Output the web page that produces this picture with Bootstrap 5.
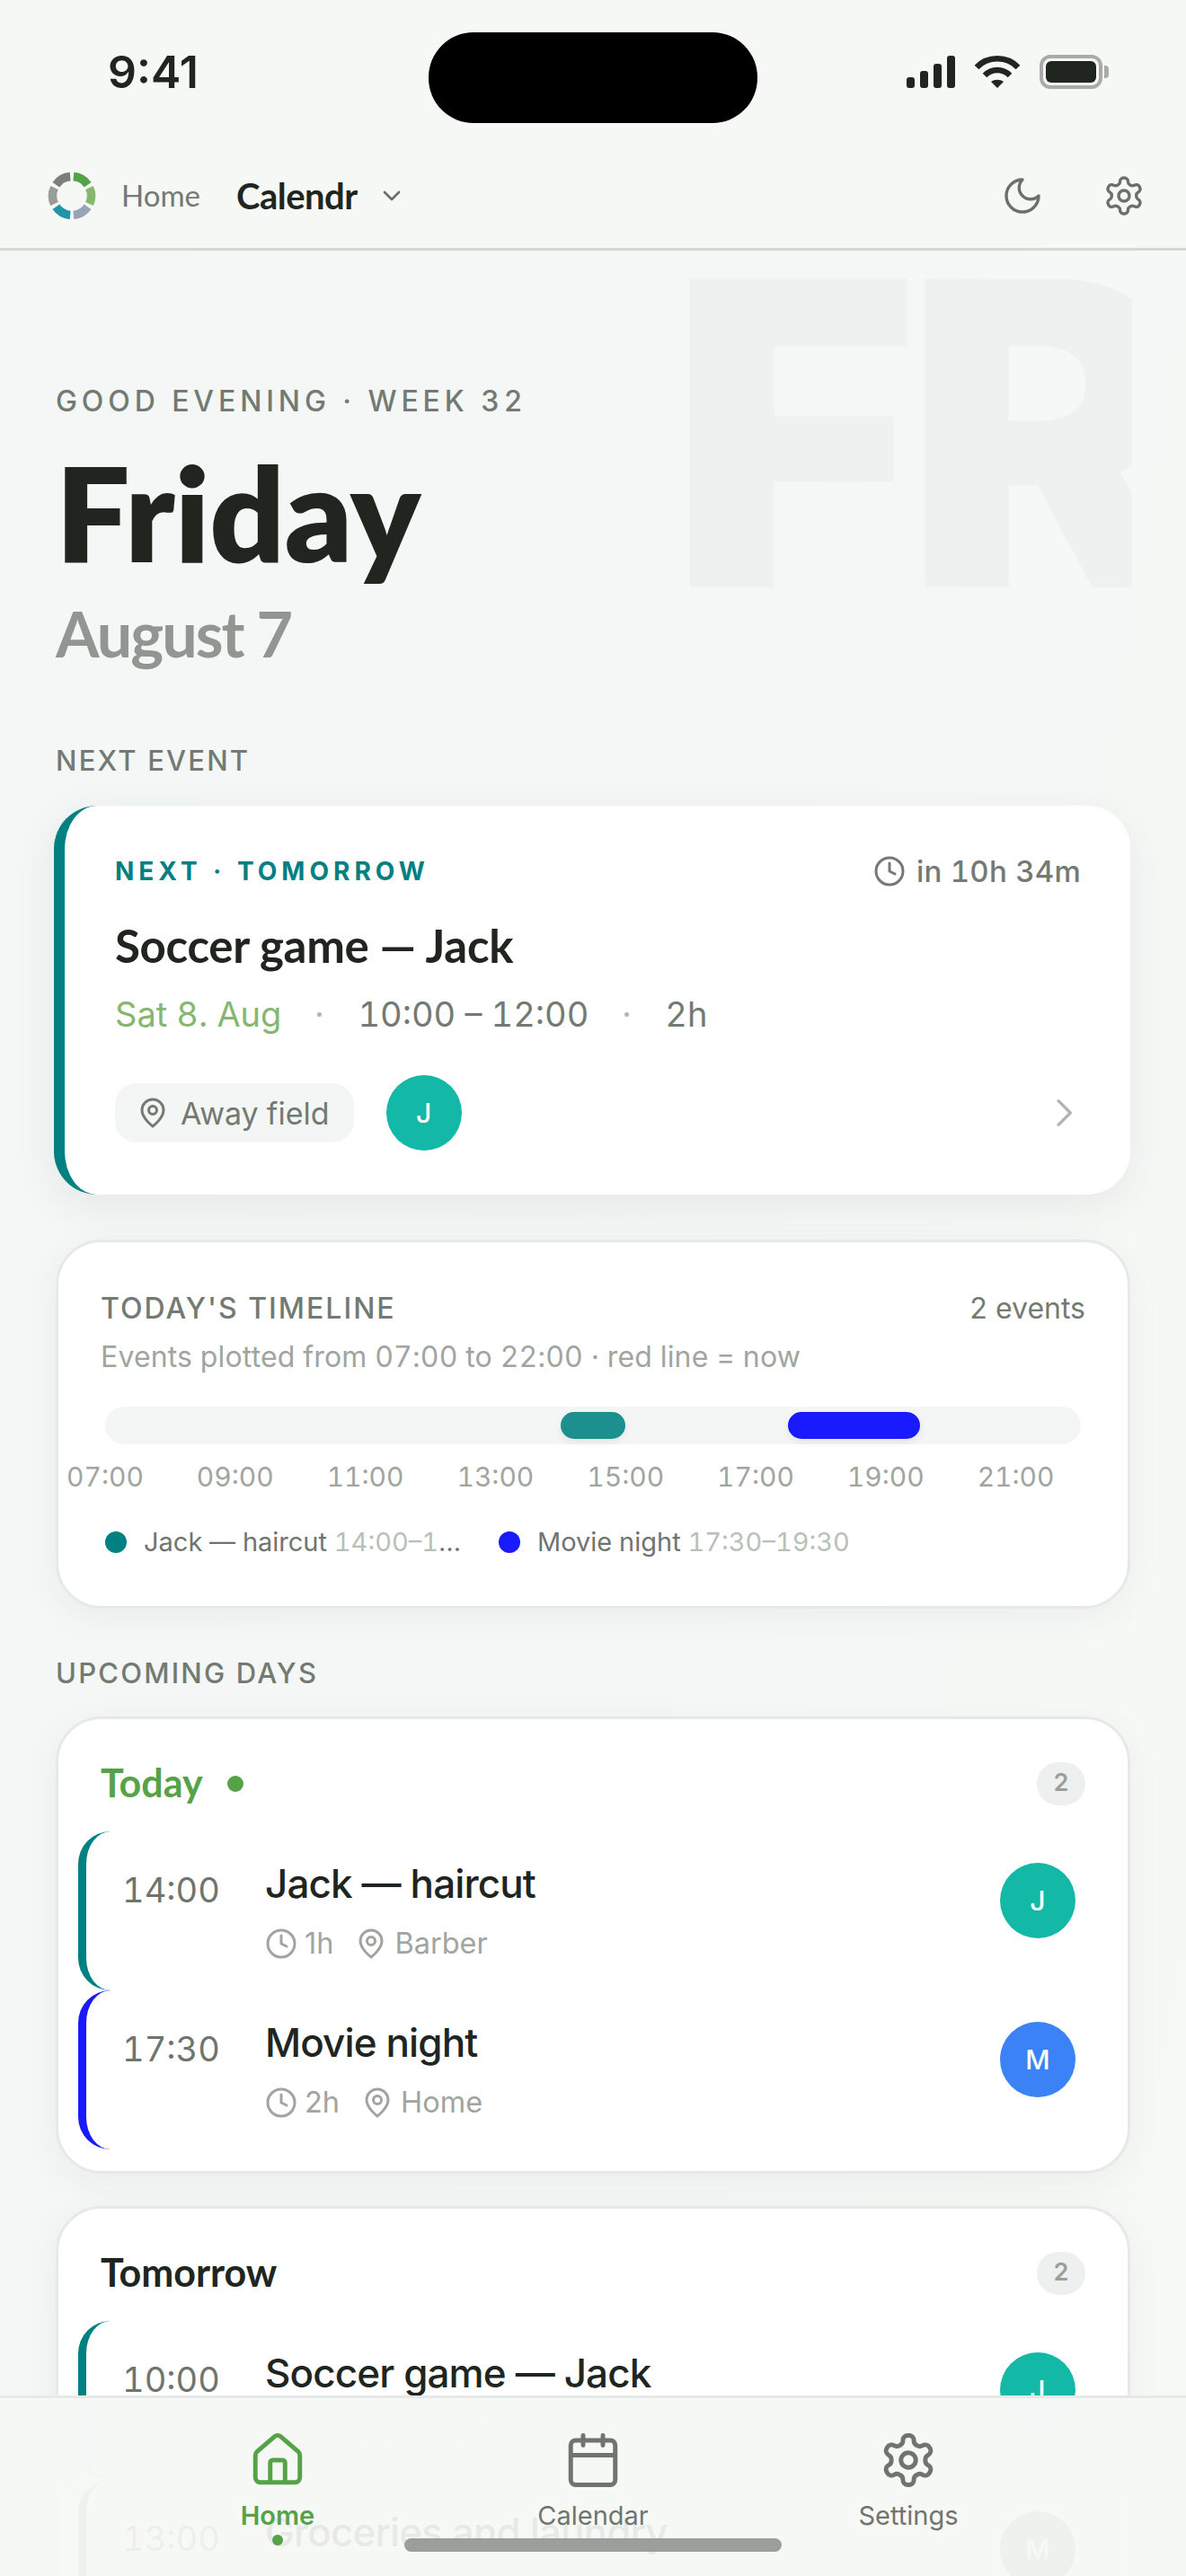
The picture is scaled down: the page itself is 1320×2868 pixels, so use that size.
<!DOCTYPE html>
<html lang="en">
<head>
    <title>Calendr - Home</title>
    <link href="https://cdn.jsdelivr.net/npm/bootstrap@5.3.3/dist/css/bootstrap.min.css" rel="stylesheet">
    <script src="https://cdn.jsdelivr.net/npm/bootstrap@5.3.3/dist/js/bootstrap.bundle.min.js"></script>
    <style>
        html, body { margin: 0; height: 2868px; overflow: hidden; }
        body { font-family: Inter, "Liberation Sans", sans-serif; color: #20261f; font-variant-numeric: tabular-nums;
               background: linear-gradient(100deg, #f3f7f6 0%, #f4f7f6 55%, #f7f9f6 100%); }
        .app-shell { position: relative; width: 1320px; height: 2868px; overflow: hidden; }
        .disp { font-family: Lato, "Liberation Sans", sans-serif; }
        .ico { fill: none; stroke: currentColor; stroke-width: 2; stroke-linecap: round; stroke-linejoin: round; flex: none; }

        /* status bar */
        .status-row { height: 160px; padding: 0 86px 0 120px; background: #f6f8f6; }
        .status-time { font-size: 50px; font-weight: 600; font-variant-numeric: normal; }
        .status-icons { gap: 20px; }
        .island { position: absolute; left: 477px; top: 36px; width: 366px; height: 101px; border-radius: 50px; background: #000; }
        .battery { width: 70px; height: 38px; border: 4px solid #a9aaa9; border-radius: 12px; padding: 3px; }
        .battery i { display: block; height: 100%; background: #20261f; border-radius: 6px; }
        .battery-cap { width: 5px; height: 14px; background: #a9aaa9; border-radius: 0 4px 4px 0; margin-left: 2px; }

        /* top nav */
        .top-nav { height: 119px; padding: 0 45px 0 53px; background: #f6f8f6; border-bottom: 3px solid #d2d8d5; }
        .top-home { font-size: 33px; color: #737a72; margin-left: 28px; }
        .top-brand { font-size: 40px; font-weight: 700; margin-left: 40px; letter-spacing: -.5px; }
        .top-chev { color: #6b716a; margin-left: 22px; }
        .top-btn { color: #6b716a; margin-left: 65px; stroke-width: 1.7; }

        /* header */
        .page-main { position: relative; padding: 0 62px; }
        .wm-clip { position: absolute; left: 700px; top: 0; width: 560px; height: 420px; overflow: hidden; }
        .wm-text { position: absolute; left: 46px; top: -29px; font-size: 472px; line-height: 466px; font-weight: 900; color: #eff1f0; letter-spacing: -14px; white-space: nowrap; }
        .greet { position: relative; font-size: 32px; line-height: 40px; font-weight: 500; letter-spacing: 4.9px; color: #737a72; padding-top: 148px; }
        .day-name { position: relative; font-size: 146px; line-height: 160px; font-weight: 800; letter-spacing: -.2px; margin: 23px 0 0; color: #20261f; }
        .date-sub { position: relative; font-size: 70px; line-height: 84px; font-weight: 700; color: #929692; letter-spacing: -2px; margin-top: 13px; }
        .sec-label { font-size: 31px; line-height: 40px; font-weight: 500; letter-spacing: 2.2px; color: #737a72; }
        .label-next { margin-top: 80px; }
        .label-upcoming { margin-top: 52px; }

        /* next event card */
        .next-card { margin: 30px 0 0 -2px; height: 433px; background: #fff; border: 0; border-left: 12px solid #008080; border-radius: 48px; padding: 55px 55px 0 56px; box-shadow: 0 12px 48px rgba(40,60,50,.08); }
        .next-tag { font-size: 28px; line-height: 36px; font-weight: 700; letter-spacing: 5px; color: #008080; }
        .next-in { font-size: 33px; line-height: 36px; font-weight: 500; color: #737a72; gap: 12px; letter-spacing: .25px; }
        .next-title { font-size: 51px; line-height: 60px; font-weight: 700; letter-spacing: -.3px; margin: 35px 0 0; }
        .next-when { font-size: 38px; line-height: 48px; color: #737a72; margin-top: 22px; }
        .next-date { color: #85b76f; }
        .sep-dot { width: 5px; height: 5px; border-radius: 50%; background: #b0b5b0; margin: 0 40px; }
        .loc-chip { height: 66px; padding: 0 27px 0 24px; gap: 13px; background: #f3f6f4; border-radius: 24px; font-size: 34px; color: #737a72; }
        .next-foot { margin-top: 44px; }
        .foot-avatar { margin-left: 36px; }
        .foot-chev { color: #b0b5b0; }
        .avatar-c { width: 84px; height: 84px; border-radius: 50%; color: #fff; font-size: 30px; font-weight: 500; flex: none; }
        .av-teal { background: #14b8a6; }
        .av-blue { background: #3b82f6; }
        .av-grey { background: #8b918b; }

        /* timeline card */
        .time-card { margin-top: 50px; height: 411px; background: #fff; border: 3px solid #e5e9e7; border-radius: 51px; padding: 54px 47px 0; box-shadow: 0 10px 40px rgba(40,60,50,.05); }
        .time-head { font-size: 32px; line-height: 40px; font-weight: 500; letter-spacing: 2px; color: #737a72; }
        .time-count { font-size: 32px; line-height: 40px; color: #737a72; }
        .time-note { font-size: 32px; line-height: 40px; color: #a0a5a0; margin-top: 14px; letter-spacing: .15px; }
        .track { position: relative; height: 42px; margin: 35px 5px 0; background: #f3f6f4; border-radius: 21px; }
        .track-ev { position: absolute; top: 6px; height: 30px; border-radius: 15px; box-shadow: 0 3px 8px rgba(0,0,0,.08); }
        .ev-teal { background: #1d8f8f; }
        .ev-blue { background: #1a1aff; }
        .hours { margin: 16px 0 0 -67.4px; }
        .hours span { flex: 0 0 144.8px; text-align: center; font-size: 30px; line-height: 40px; color: #a0a5a0; }
        .legend { margin: 33px 0 0 5px; font-size: 29px; line-height: 40px; color: #6f756e; gap: 38px; }
        .legend-one { width: 400px; }
        .legend-dot { width: 24px; height: 24px; border-radius: 50%; margin-right: 19px; flex: none; }
        .dot-teal { background: #008080; }
        .legend-txt { white-space: nowrap; overflow: hidden; text-overflow: ellipsis; }
        .legend-txt em { font-style: normal; color: #b9bfb9; }

        /* day cards */
        .day-card { background: #fff; border: 3px solid #e5e9e7; border-radius: 51px; box-shadow: 0 10px 40px rgba(40,60,50,.05); }
        .day-today { margin-top: 28px; }
        .day-tomorrow { margin-top: 36px; }
        .day-head { padding: 18px 47px 0; height: 125px; }
        .day-title { font-size: 43px; font-weight: 700; }
        .today-green { color: #55a247; }
        .today-dot { width: 18px; height: 18px; border-radius: 50%; background: #55a247; margin-left: 27px; }
        .count-pill { width: 54px; height: 48px; border-radius: 24px; background: #eef0ef; color: #9a9f9a; font-size: 27px; font-weight: 600; }
        .ev-row { height: 177px; margin-left: 22px; padding: 35px 58px 0 40px; border-left: 9px solid #008080; border-radius: 36px; }
        .row-blue { border-left-color: #1a1aff; margin-bottom: 24px; }
        .row-grey { border-left-color: #8b918b; }
        .ev-time { width: 159px; flex: none; font-size: 38px; line-height: 46px; color: #6f756e; padding-top: 7px; }
        .ev-title { font-size: 44px; line-height: 54px; font-weight: 500; letter-spacing: -.9px; color: #20261f; margin-top: -4px; }
        .ev-meta { font-size: 32.5px; line-height: 38px; color: #a0a5a0; margin-top: 21px; font-variant-numeric: normal; }

        /* bottom tabs */
        .tab-bar { position: absolute; left: 0; right: 0; bottom: 0; height: 201px; padding-top: 36px; background: linear-gradient(rgba(246,248,246,.99) 40%, rgba(246,248,246,.93) 60%); border-top: 3px solid #e6e9e7; }
        .tab-item { width: 351px; color: #6f756e; font-size: 29px; line-height: 36px; position: relative; }
        .tab-item svg { margin: 0 0 11px; stroke-width: 1.8; }
        .tab-on { color: #55a247; font-weight: 600; }
        .tab-dot { position: absolute; left: 169.5px; top: 116px; width: 12px; height: 12px; border-radius: 50%; background: #55a247; }
        .home-bar { position: absolute; left: 450px; top: 2826px; width: 420px; height: 15px; border-radius: 8px; background: #9c9e9c; }
    </style>
</head>
<body>
    <!-- icons used more than once -->
    <svg width="0" height="0" class="position-absolute">
        <symbol id="i-clock" viewBox="0 0 24 24"><circle cx="12" cy="12" r="10"/><path d="M12 6v6l4 2"/></symbol>
        <symbol id="i-pin" viewBox="0 0 24 24"><path d="M20 10c0 6-8 12-8 12s-8-6-8-12a8 8 0 0 1 16 0Z"/><circle cx="12" cy="10" r="3"/></symbol>
        <symbol id="i-gear" viewBox="0 0 24 24"><path d="M12.22 2h-.44a2 2 0 0 0-2 2v.18a2 2 0 0 1-1 1.73l-.43.25a2 2 0 0 1-2 0l-.15-.08a2 2 0 0 0-2.73.73l-.22.38a2 2 0 0 0 .73 2.73l.15.1a2 2 0 0 1 1 1.72v.51a2 2 0 0 1-1 1.74l-.15.09a2 2 0 0 0-.73 2.73l.22.38a2 2 0 0 0 2.73.73l.15-.08a2 2 0 0 1 2 0l.43.25a2 2 0 0 1 1 1.73V20a2 2 0 0 0 2 2h.44a2 2 0 0 0 2-2v-.18a2 2 0 0 1 1-1.73l.43-.25a2 2 0 0 1 2 0l.15.08a2 2 0 0 0 2.73-.73l.22-.39a2 2 0 0 0-.73-2.73l-.15-.08a2 2 0 0 1-1-1.74v-.5a2 2 0 0 1 1-1.74l.15-.09a2 2 0 0 0 .73-2.73l-.22-.38a2 2 0 0 0-2.73-.73l-.15.08a2 2 0 0 1-2 0l-.43-.25a2 2 0 0 1-1-1.73V4a2 2 0 0 0-2-2z"/><circle cx="12" cy="12" r="3"/></symbol>
    </svg>

    <div class="app-shell">
        <!-- Status bar -->
        <div class="status-row d-flex justify-content-between align-items-center">
            <span class="status-time">9:41</span>
            <div class="status-icons d-flex align-items-center">
                <svg width="54" height="36" viewBox="0 0 54 36" fill="#20261f"><rect x="0" y="24" width="9" height="12" rx="3"/><rect x="15" y="17" width="9" height="19" rx="3"/><rect x="30" y="9" width="9" height="27" rx="3"/><rect x="45" y="0" width="9" height="36" rx="3"/></svg>
                <svg width="54" height="38" viewBox="0 0 54 38" fill="none" stroke="#20261f" stroke-width="6.5"><path d="M4 14C16 1 38 1 50 14"/><path d="M13 23c8-8 20-8 28 0"/><path d="M27 37l-7-7c4-3 10-3 14 0z" fill="#20261f" stroke="none"/></svg>
                <div class="d-flex align-items-center">
                    <div class="battery"><i></i></div><div class="battery-cap"></div>
                </div>
            </div>
        </div>
        <div class="island"></div>

        <!-- Top nav -->
        <nav class="top-nav d-flex align-items-center">
            <svg width="54" height="54" viewBox="0 0 54 54" fill="none" stroke-width="9.5">
                <circle cx="27" cy="27" r="21.5" pathLength="360" stroke-dasharray="50 310" stroke="#55a247" transform="rotate(-85 27 27)"/>
                <circle cx="27" cy="27" r="21.5" pathLength="360" stroke-dasharray="50 310" stroke="#85b76f" transform="rotate(-25 27 27)"/>
                <circle cx="27" cy="27" r="21.5" pathLength="360" stroke-dasharray="50 310" stroke="#9aa3b5" transform="rotate(35 27 27)"/>
                <circle cx="27" cy="27" r="21.5" pathLength="360" stroke-dasharray="50 310" stroke="#1f95a5" transform="rotate(95 27 27)"/>
                <circle cx="27" cy="27" r="21.5" pathLength="360" stroke-dasharray="50 310" stroke="#9a9c98" transform="rotate(155 27 27)"/>
                <circle cx="27" cy="27" r="21.5" pathLength="360" stroke-dasharray="50 310" stroke="#7b7f7a" transform="rotate(215 27 27)"/>
            </svg>
            <span class="top-home disp">Home</span>
            <span class="top-brand disp">Calendr</span>
            <svg class="ico top-chev" width="32" height="32" viewBox="0 0 24 24"><path d="m6 9 6 6 6-6"/></svg>
            <div class="ms-auto d-flex align-items-center">
                <svg class="ico top-btn" width="48" height="48" viewBox="0 0 24 24"><path d="M12 3a6 6 0 0 0 9 9 9 9 0 1 1-9-9Z"/></svg>
                <svg class="ico top-btn" width="48" height="48"><use href="#i-gear"/></svg>
            </div>
        </nav>

        <main class="page-main">
            <div class="wm-clip"><div class="wm-text">FR</div></div>

            <div class="greet">GOOD EVENING · WEEK 32</div>
            <h1 class="day-name disp">Friday</h1>
            <div class="date-sub disp">August 7</div>

            <div class="sec-label label-next">NEXT EVENT</div>

            <!-- Next event -->
            <div class="card next-card">
                <div class="d-flex justify-content-between align-items-center">
                    <span class="next-tag">NEXT · TOMORROW</span>
                    <span class="next-in d-flex align-items-center"><svg class="ico" width="36" height="36"><use href="#i-clock"/></svg>in 10h 34m</span>
                </div>
                <h2 class="next-title disp">Soccer game — Jack</h2>
                <div class="next-when d-flex align-items-center">
                    <span class="next-date">Sat 8. Aug</span><span class="sep-dot"></span><span>10:00 – 12:00</span><span class="sep-dot"></span><span>2h</span>
                </div>
                <div class="next-foot d-flex align-items-center">
                    <span class="loc-chip d-flex align-items-center"><svg class="ico" width="36" height="36"><use href="#i-pin"/></svg>Away field</span>
                    <span class="avatar-c av-teal foot-avatar d-flex align-items-center justify-content-center">J</span>
                    <svg class="ico foot-chev ms-auto" width="40" height="40" viewBox="0 0 24 24"><path d="m9 4 8 8-8 8"/></svg>
                </div>
            </div>

            <!-- Timeline -->
            <div class="card time-card">
                <div class="d-flex justify-content-between">
                    <span class="time-head">TODAY'S TIMELINE</span>
                    <span class="time-count">2 events</span>
                </div>
                <div class="time-note">Events plotted from 07:00 to 22:00 · red line = now</div>
                <div class="track">
                    <div class="track-ev ev-teal" style="left: 46.7%; width: 6.6%"></div>
                    <div class="track-ev ev-blue" style="left: 70%; width: 13.5%"></div>
                </div>
                <div class="hours d-flex">
                    <span>07:00</span><span>09:00</span><span>11:00</span><span>13:00</span><span>15:00</span><span>17:00</span><span>19:00</span><span>21:00</span>
                </div>
                <div class="legend d-flex">
                    <div class="legend-one d-flex align-items-center"><span class="legend-dot dot-teal"></span><span class="legend-txt">Jack — haircut <em>14:00–15:00</em></span></div>
                    <div class="d-flex align-items-center"><span class="legend-dot ev-blue"></span><span class="legend-txt">Movie night <em>17:30–19:30</em></span></div>
                </div>
            </div>

            <div class="sec-label label-upcoming">UPCOMING DAYS</div>

            <!-- Today -->
            <div class="card day-card day-today">
                <div class="day-head d-flex align-items-center justify-content-between">
                    <div class="d-flex align-items-center"><span class="day-title today-green disp">Today</span><span class="today-dot"></span></div>
                    <span class="count-pill d-flex align-items-center justify-content-center">2</span>
                </div>
                <div class="ev-row d-flex">
                    <div class="ev-time">14:00</div>
                    <div class="flex-grow-1">
                        <div class="ev-title">Jack — haircut</div>
                        <div class="ev-meta d-flex align-items-center"><svg class="ico me-2" width="36" height="36"><use href="#i-clock"/></svg>1h<svg class="ico ms-4 me-2" width="36" height="36"><use href="#i-pin"/></svg>Barber</div>
                    </div>
                    <div class="avatar-c av-teal d-flex align-items-center justify-content-center">J</div>
                </div>
                <div class="ev-row row-blue d-flex">
                    <div class="ev-time">17:30</div>
                    <div class="flex-grow-1">
                        <div class="ev-title">Movie night</div>
                        <div class="ev-meta d-flex align-items-center"><svg class="ico me-2" width="36" height="36"><use href="#i-clock"/></svg>2h<svg class="ico ms-4 me-2" width="36" height="36"><use href="#i-pin"/></svg>Home</div>
                    </div>
                    <div class="avatar-c av-blue d-flex align-items-center justify-content-center">M</div>
                </div>
            </div>

            <!-- Tomorrow -->
            <div class="card day-card day-tomorrow">
                <div class="day-head d-flex align-items-center justify-content-between">
                    <span class="day-title disp">Tomorrow</span>
                    <span class="count-pill d-flex align-items-center justify-content-center">2</span>
                </div>
                <div class="ev-row d-flex">
                    <div class="ev-time">10:00</div>
                    <div class="flex-grow-1">
                        <div class="ev-title">Soccer game — Jack</div>
                        <div class="ev-meta d-flex align-items-center"><svg class="ico me-2" width="36" height="36"><use href="#i-clock"/></svg>2h<svg class="ico ms-4 me-2" width="36" height="36"><use href="#i-pin"/></svg>Away field</div>
                    </div>
                    <div class="avatar-c av-teal d-flex align-items-center justify-content-center">J</div>
                </div>
                <div class="ev-row row-grey d-flex">
                    <div class="ev-time">13:00</div>
                    <div class="flex-grow-1">
                        <div class="ev-title">Groceries and laundry</div>
                    </div>
                    <div class="avatar-c av-grey d-flex align-items-center justify-content-center">M</div>
                </div>
            </div>
        </main>

        <!-- Bottom tabs -->
        <div class="tab-bar d-flex justify-content-center">
            <div class="tab-item tab-on d-flex flex-column align-items-center">
                <svg class="ico" width="66" height="66" viewBox="0 0 24 24"><path d="M15 21v-8a1 1 0 0 0-1-1h-4a1 1 0 0 0-1 1v8"/><path d="M3 10a2 2 0 0 1 .709-1.528l7-5.999a2 2 0 0 1 2.582 0l7 5.999A2 2 0 0 1 21 10v9a2 2 0 0 1-2 2H5a2 2 0 0 1-2-2z"/></svg>
                <span>Home</span><span class="tab-dot"></span>
            </div>
            <div class="tab-item d-flex flex-column align-items-center">
                <svg class="ico" width="66" height="66" viewBox="0 0 24 24"><path d="M8 2v4M16 2v4M3 10h18"/><rect x="3" y="4" width="18" height="18" rx="2"/></svg>
                <span>Calendar</span>
            </div>
            <div class="tab-item d-flex flex-column align-items-center">
                <svg class="ico" width="66" height="66"><use href="#i-gear"/></svg>
                <span>Settings</span>
            </div>
        </div>
        <div class="home-bar"></div>
    </div>
</body>
</html>
